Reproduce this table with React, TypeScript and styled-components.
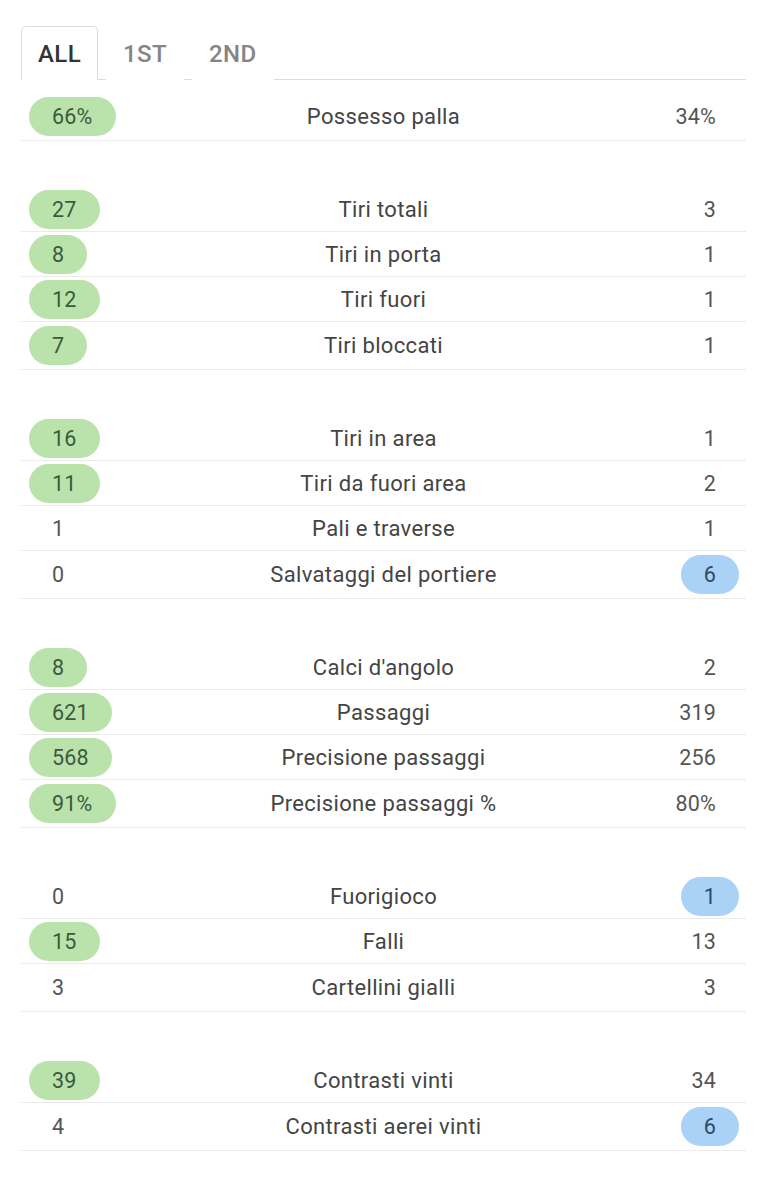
import React from "react";
import styled, { createGlobalStyle } from "styled-components";

const Global = createGlobalStyle`
  html, body { margin: 0; padding: 0; background: #ffffff; }
  body { font-family: Roboto, "Noto Sans", Arial, sans-serif; }
`;

const Page = styled.div`
  padding: 26px 21px 0 21px;
  width: 725px;
`;

const TabBar = styled.div`
  display: flex;
  gap: 8px;
  border-bottom: 1px solid #dcdcdc;
  height: 53px;
`;

const Tab = styled.div<{ $active?: boolean }>`
  display: flex;
  align-items: center;
  padding: 0 16px;
  box-sizing: border-box;
  font-size: 24px;
  letter-spacing: 0.4px;
  font-weight: 500;
  color: ${(p) => (p.$active ? "#333333" : "#858585")};
  border: 1px solid ${(p) => (p.$active ? "#dcdcdc" : "transparent")};
  border-bottom: none;
  border-radius: 5px 5px 0 0;
  background: #fff;
  margin-bottom: -1px;
  height: 54px;
`;

const StatsList = styled.div`
  margin-top: 13px;
  display: flex;
  flex-direction: column;
  gap: 46px;
`;

const Group = styled.div`
  display: flex;
  flex-direction: column;
`;

const Row = styled.div<{ $last?: boolean }>`
  display: grid;
  grid-template-columns: 1fr auto 1fr;
  align-items: center;
  height: ${(p) => (p.$last ? 48 : 45)}px;
  box-sizing: border-box;
  border-bottom: 1px solid #ebebeb;
`;

const Label = styled.div`
  font-size: 22px;
  letter-spacing: 0.35px;
  color: #444444;
  text-align: center;
  white-space: nowrap;
`;

const Value = styled.div<{ $side: "left" | "right"; $hl?: "green" | "blue" }>`
  justify-self: ${(p) => (p.$side === "left" ? "start" : "end")};
  margin: ${(p) => (p.$side === "left" ? "0 0 0 8px" : "0 7px 0 0")};
  height: 39px;
  box-sizing: border-box;
  display: flex;
  align-items: center;
  padding: 0 23px;
  border-radius: 20px;
  font-size: 21.5px;
  letter-spacing: 0.2px;
  color: ${(p) =>
    p.$hl === "green" ? "#3c5a3c" : p.$hl === "blue" ? "#2f4a64" : "#555555"};
  background: ${(p) =>
    p.$hl === "green" ? "#b9e3aa" : p.$hl === "blue" ? "#a9d2f6" : "transparent"};
`;

type Stat = [string, string, string, ("l" | "r" | "")?];

const groups: Stat[][] = [
  [["66%", "Possesso palla", "34%", "l"]],
  [
    ["27", "Tiri totali", "3", "l"],
    ["8", "Tiri in porta", "1", "l"],
    ["12", "Tiri fuori", "1", "l"],
    ["7", "Tiri bloccati", "1", "l"],
  ],
  [
    ["16", "Tiri in area", "1", "l"],
    ["11", "Tiri da fuori area", "2", "l"],
    ["1", "Pali e traverse", "1", ""],
    ["0", "Salvataggi del portiere", "6", "r"],
  ],
  [
    ["8", "Calci d'angolo", "2", "l"],
    ["621", "Passaggi", "319", "l"],
    ["568", "Precisione passaggi", "256", "l"],
    ["91%", "Precisione passaggi %", "80%", "l"],
  ],
  [
    ["0", "Fuorigioco", "1", "r"],
    ["15", "Falli", "13", "l"],
    ["3", "Cartellini gialli", "3", ""],
  ],
  [
    ["39", "Contrasti vinti", "34", "l"],
    ["4", "Contrasti aerei vinti", "6", "r"],
  ],
];

export default function App() {
  return (
    <>
      <Global />
      <Page>
        <TabBar>
          <Tab $active>ALL</Tab>
          <Tab>1ST</Tab>
          <Tab>2ND</Tab>
        </TabBar>
        <StatsList>
          {groups.map((g, gi) => (
            <Group key={gi}>
              {g.map(([l, label, r, hl], i) => (
                <Row key={label} $last={i === g.length - 1}>
                  <Value $side="left" $hl={hl === "l" ? "green" : undefined}>
                    {l}
                  </Value>
                  <Label>{label}</Label>
                  <Value $side="right" $hl={hl === "r" ? "blue" : undefined}>
                    {r}
                  </Value>
                </Row>
              ))}
            </Group>
          ))}
        </StatsList>
      </Page>
    </>
  );
}
